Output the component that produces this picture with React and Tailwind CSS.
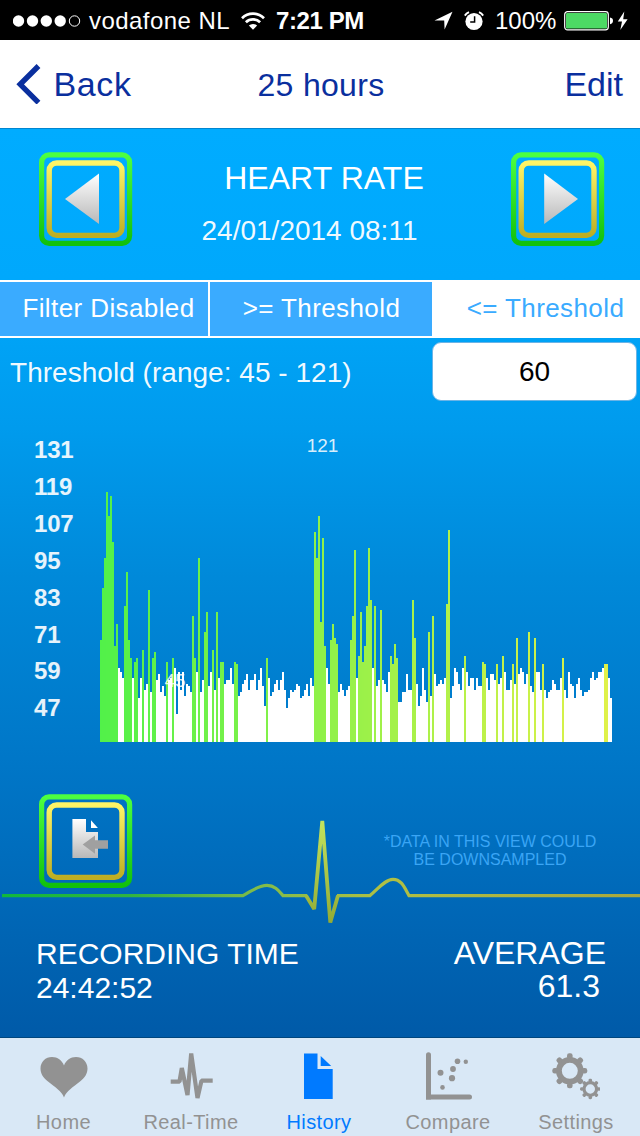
import React from 'react';

// One entry per sample, in chart units (2px each)
const samples = [
  51, 77, 92, 125, 113, 123, 100, 48, 59, 37, 35, 32, 68, 85, 51, 42,
  32, 40, 42, 22, 32, 46, 26, 29, 76, 25, 42, 45, 31, 34, 25, 28,
  23, 40, 31, 32, 42, 37, 14, 35, 26, 35, 23, 29, 28, 25, 63, 42,
  35, 92, 25, 31, 55, 65, 28, 35, 46, 26, 65, 32, 40, 40, 29, 31,
  31, 37, 29, 40, 39, 23, 25, 29, 31, 34, 26, 31, 31, 34, 26, 31,
  37, 28, 18, 42, 32, 23, 25, 29, 31, 26, 31, 35, 26, 17, 22, 26,
  25, 26, 29, 28, 22, 23, 26, 29, 23, 32, 28, 105, 92, 113, 60, 102,
  48, 37, 29, 51, 59, 52, 49, 25, 29, 26, 23, 26, 28, 51, 63, 96,
  32, 43, 65, 40, 48, 68, 97, 71, 37, 68, 28, 31, 66, 31, 29, 25,
  35, 43, 39, 49, 42, 20, 20, 25, 25, 34, 26, 26, 71, 52, 29, 18,
  23, 37, 26, 20, 55, 23, 63, 34, 28, 29, 31, 29, 32, 69, 106, 22,
  28, 37, 35, 29, 26, 37, 43, 35, 28, 32, 32, 26, 32, 28, 28, 40,
  39, 32, 26, 34, 34, 31, 39, 29, 32, 43, 35, 26, 26, 31, 39, 29,
  52, 34, 37, 35, 29, 34, 55, 28, 25, 52, 35, 35, 26, 39, 26, 22,
  25, 26, 31, 29, 26, 26, 32, 42, 26, 22, 35, 29, 28, 22, 29, 32,
  26, 23, 25, 25, 26, 32, 35, 31, 32, 35, 35, 37, 39, 39, 32, 22,
];

const THRESHOLD_UNITS = 38;
const CHART_HEIGHT = 311;

const axisLabels = [131, 119, 107, 95, 83, 71, 59, 47];

// Bars below the threshold are white, the rest fade from green to yellow
const barColor = (value, index) => {
  if (value < THRESHOLD_UNITS) return '#ffffff';
  const t = index / (samples.length - 1);
  const red = Math.round(82 + t * 142);
  return `rgb(${red}, 241, 73)`;
};

const StatusBar = () => (
  <div className="flex h-10 items-center bg-black pl-[13px] pt-px text-2xl leading-none text-white">
    <svg width="68" height="14" viewBox="0 0 68 14" className="shrink-0">
      {[5.5, 19.5, 33.3, 47.2].map((cx) => (
        <circle key={cx} cx={cx} cy="7" r="5.7" fill="#fff" />
      ))}
      <circle cx="61.5" cy="7" r="5.2" fill="none" stroke="#fff" strokeWidth="1" />
    </svg>
    <span className="ml-[8px] w-[152px] shrink-0 whitespace-nowrap tracking-[0.45px]">vodafone NL</span>
    <svg width="24" height="18" viewBox="0 0 24 18" className="shrink-0" fill="none" stroke="#fff" strokeWidth="2.7">
      <path d="M1 6.2 A15.6 15.6 0 0 1 23 6.2" />
      <path d="M4.9 10.2 A10.2 10.2 0 0 1 19.1 10.2" />
      <path d="M12 17.8 L7.9 13.6 A5.9 5.9 0 0 1 16.1 13.6 Z" fill="#fff" stroke="none" />
    </svg>
    <span className="ml-[11px] w-[158px] shrink-0 whitespace-nowrap font-bold tracking-[-0.4px]">7:21 PM</span>
    <svg width="20" height="19" viewBox="0 0 20 19" className="shrink-0">
      <path d="M0.5 9.5 L18.5 0.8 L10.6 18.6 L10.2 9.5 Z" fill="#fff" />
    </svg>
    <svg width="20" height="20" viewBox="0 0 20 20" className="ml-[10px] shrink-0">
      <circle cx="10" cy="10.5" r="8.6" fill="#fff" />
      <path d="M0.8 4.6 A10.5 10.5 0 0 1 5 1.2 M15 1.2 A10.5 10.5 0 0 1 19.2 4.6" fill="none" stroke="#fff" strokeWidth="1.9" />
      <path d="M10.6 5.2 V11 H6.2" fill="none" stroke="#000" strokeWidth="1.5" />
    </svg>
    <span className="ml-[11px] w-[69px] shrink-0 whitespace-nowrap">100%</span>
    <svg width="64" height="20" viewBox="0 0 64 20" className="shrink-0">
      <rect x="0.7" y="0.7" width="43.6" height="18.2" rx="2.8" fill="none" stroke="#fff" strokeWidth="1.2" />
      <rect x="2" y="2" width="41" height="15.6" rx="1.2" fill="#4cd964" />
      <path d="M46 6.5 Q49 7 49 9.8 Q49 12.6 46 13.2 Z" fill="#fff" />
      <path d="M60.3 0.6 L53.8 10.6 H58 L56.3 19 L63.6 8.2 H59.2 Z" fill="#fff" />
    </svg>
  </div>
);

const NavBar = () => (
  <div className="grid h-[88px] grid-cols-3 items-center bg-white text-[#0a2f9e]">
    <div className="flex items-center pl-[16px]">
      <svg width="25" height="40" viewBox="0 0 25 40" fill="none" stroke="#0a2f9e" strokeWidth="5.4">
        <path d="M22.5 2 L4.2 20.3 L22.5 38.6" />
      </svg>
      <span className="ml-[12.5px] text-[34px] leading-none tracking-[0.6px]">Back</span>
    </div>
    <span className="pl-[2px] pt-[2px] text-center text-[32px] leading-none tracking-[0.3px]">25 hours</span>
    <span className="pr-[17px] text-right text-[34px] leading-none">Edit</span>
  </div>
);

const FrameButton = ({ id, children }) => (
  <button className="h-[94px] w-[94px] shrink-0">
    <svg width="94" height="94" viewBox="0 0 94 94">
      <defs>
        <linearGradient id={`${id}-green`} x1="0" y1="0" x2="0" y2="1">
          <stop offset="0" stopColor="#4dff40" />
          <stop offset="1" stopColor="#12c10c" />
        </linearGradient>
        <linearGradient id={`${id}-yellow`} x1="0" y1="0" x2="0" y2="1">
          <stop offset="0" stopColor="#fff566" />
          <stop offset="1" stopColor="#beae22" />
        </linearGradient>
        <linearGradient id={`${id}-silver`} x1="0" y1="0" x2="0" y2="1">
          <stop offset="0" stopColor="#ffffff" />
          <stop offset="1" stopColor="#b8b8b8" />
        </linearGradient>
      </defs>
      <rect x="2.6" y="2.9" width="88" height="88.4" rx="7.5" fill="none" stroke={`url(#${id}-green)`} strokeWidth="5.2" />
      <rect x="10.2" y="11" width="72.8" height="72.4" rx="7.5" fill="none" stroke={`url(#${id}-yellow)`} strokeWidth="5.4" />
      {children}
    </svg>
  </button>
);

const Header = () => (
  <div className="flex h-[152px] items-start justify-between border-t border-[#0086d0] pl-[39px] pr-[35px] pt-[23px] text-white">
    <FrameButton id="prev">
      <path d="M26 47 L60 21.5 V72 Z" fill="url(#prev-silver)" />
    </FrameButton>
    <div className="flex flex-1 flex-col text-center">
      <h1 className="pl-[4px] text-[32px] leading-[52px] tracking-[0.05px]">HEART RATE</h1>
      <span className="pr-[25px] pt-px text-[28px] leading-[52px] text-white/95">24/01/2014 08:11</span>
    </div>
    <FrameButton id="next">
      <path d="M67 47 L33.2 21.5 V72 Z" fill="url(#next-silver)" />
    </FrameButton>
  </div>
);

const FilterTabs = () => (
  <div className="flex h-[58px] border-y-2 border-white bg-[#3aabff] text-[26px] leading-none tracking-[0.4px] text-white">
    <button className="w-[210px] border-r-2 border-white pb-[2px] pl-[9px]">Filter Disabled</button>
    <button className="w-[222px] pb-[2px] pl-px">&gt;= Threshold</button>
    <button className="flex-1 whitespace-nowrap bg-white pb-[2px] pl-[19px] text-[#3aabff]">&lt;= Threshold</button>
  </div>
);

const ThresholdRow = () => (
  <div className="flex h-[68px] items-center justify-between pl-[10px] pr-[3px] text-[28px] leading-none text-white">
    <span className="pt-[2px] tracking-[0.03px] text-white/95">Threshold (range: 45 - 121)</span>
    <div className="mb-px flex h-[59px] w-[205px] items-center justify-center rounded-[9px] border border-[#6bb4e6] bg-white text-black">
      60
    </div>
  </div>
);

const Chart = () => (
  <div className="flex h-[374px] pt-[25px]">
    <div className="flex w-[100px] flex-col pl-[34px] pt-px text-2xl font-bold leading-[36.9px] tracking-[-0.2px] text-white/90">
      {axisLabels.map((label) => (
        <span key={label}>{label}</span>
      ))}
    </div>
    <svg width="512" height={CHART_HEIGHT} viewBox={`0 0 512 ${CHART_HEIGHT}`} shapeRendering="crispEdges">
      {samples.map((value, index) => (
        <rect
          key={index}
          x={index * 2}
          y={CHART_HEIGHT - value * 2}
          width="2"
          height={value * 2}
          fill={barColor(value, index)}
        />
      ))}
      <text x="222.5" y="21" textAnchor="middle" fontSize="19" fill="#fff" fillOpacity="0.85">121</text>
      <text x="75" y="256" textAnchor="middle" fontSize="19" fill="#fff" fillOpacity="0.85">45</text>
    </svg>
  </div>
);

const Summary = () => (
  <div className="relative h-[257px] text-white">
    <svg width="640" height="257" viewBox="0 0 640 257" className="absolute left-0 top-0" fill="none" strokeWidth="3.2">
      <defs>
        <linearGradient id="pulse-line" gradientUnits="userSpaceOnUse" x1="0" y1="0" x2="640" y2="0">
          <stop offset="0" stopColor="#10b83c" />
          <stop offset="0.2" stopColor="#30b440" />
          <stop offset="0.4" stopColor="#7fbb4a" />
          <stop offset="0.6" stopColor="#b0c044" />
          <stop offset="1" stopColor="#a8a83e" />
        </linearGradient>
        <linearGradient id="pulse-spike" gradientUnits="userSpaceOnUse" x1="0" y1="40" x2="0" y2="144">
          <stop offset="0" stopColor="#c4e45e" />
          <stop offset="1" stopColor="#92aa34" />
        </linearGradient>
      </defs>
      <path
        d="M2 115.6 H243 C252 111 258 105.4 267 105.4 C275 105.4 279 111 283 115.6 H307"
        stroke="url(#pulse-line)"
      />
      <path d="M337 115.6 H370 C378 109 385 99.3 393 99.3 C402 99.3 405 109 409 115.6 H640" stroke="url(#pulse-line)" />
      <path d="M306 115.6 L314.2 129 L322.3 41 L330.3 142.5 L338 115.6" stroke="url(#pulse-spike)" strokeWidth="3.8" strokeLinejoin="bevel" />
    </svg>
    <div className="flex h-[156px] items-start justify-between pl-[39px] pt-[14px]">
      <FrameButton id="export">
        <path d="M33.4 25 H47 V38 H59 V64 H33.4 Z" fill="url(#export-silver)" />
        <path d="M52 26.3 L58.9 34 H52 Z" fill="#fff" />
        <path d="M43.7 50.4 L56 41.6 V46.2 H69 V54.8 H56 V59.7 Z" fill="#a0a0a0" />
      </FrameButton>
      <p className="w-[300px] pt-[39px] text-center text-base leading-[18px] text-[#3aa5f5]">
        *DATA IN THIS VIEW COULD
        <br />
        BE DOWNSAMPLED
      </p>
    </div>
    <div className="flex justify-between pl-[36px] pr-[34px] pt-px">
      <div className="flex flex-col text-[30px] leading-[34px]">
        <span>RECORDING TIME</span>
        <span>24:42:52</span>
      </div>
      <div className="flex flex-col text-right text-[32px] leading-[33px]">
        <span>AVERAGE</span>
        <span className="pr-[6px]">61.3</span>
      </div>
    </div>
  </div>
);

const gearTeeth = [0, 45, 90, 135, 180, 225, 270, 315];

const Gear = ({ cx, cy, radius, stroke, tooth }) => (
  <g>
    <circle cx={cx} cy={cy} r={radius} fill="none" stroke="#929292" strokeWidth={stroke} />
    {gearTeeth.map((angle) => (
      <rect
        key={angle}
        x={cx - tooth / 2}
        y={cy - radius - stroke / 2 - tooth * 0.65}
        width={tooth}
        height={tooth}
        rx={tooth * 0.4}
        fill="#929292"
        transform={`rotate(${angle} ${cx} ${cy})`}
      />
    ))}
  </g>
);

const tabs = [
  {
    label: 'Home',
    icon: (
      <path
        d="M24 45.5 C21.5 38.5 15 35.5 8 29.5 C3 25.5 0.5 21.5 0.5 16.5 C0.5 9.8 5.6 5 12 5 C17.5 5 22 8.2 24 13.5 C26 8.2 30.5 5 36 5 C42.4 5 47.5 9.8 47.5 16.5 C47.5 21.5 45 25.5 40 29.5 C33 35.5 26.5 38.5 24 45.5 Z"
        fill="#929292"
      />
    ),
  },
  {
    label: 'Real-Time',
    icon: (
      <path
        d="M3.7 29.7 H12.5 L14.8 16 L20.5 43 L24.2 1.5 L30.5 46 L34.5 28.6 H45.7"
        fill="none"
        stroke="#929292"
        strokeWidth="4.2"
        strokeLinejoin="bevel"
      />
    ),
  },
  {
    label: 'History',
    active: true,
    icon: <path d="M9 1.5 H22.5 V17 H37.7 V47 H9 Z M25.7 4 L36.2 14 H25.7 Z" fill="#007aff" />,
  },
  {
    label: 'Compare',
    icon: (
      <g fill="#929292">
        <path d="M4.5 2.8 V45 H45.5" fill="none" stroke="#929292" strokeWidth="5" strokeLinecap="round" />
        <rect x="2" y="43" width="5" height="4.5" />
        <circle cx="16.5" cy="20.7" r="3" />
        <circle cx="18.5" cy="35.4" r="2.3" />
        <circle cx="28" cy="26.2" r="3.1" />
        <circle cx="29" cy="17" r="2.9" />
        <circle cx="33.5" cy="9.2" r="2.8" />
        <circle cx="41.8" cy="9.8" r="2.2" />
      </g>
    ),
  },
  {
    label: 'Settings',
    icon: (
      <g>
        <Gear cx={17.8} cy={18.8} radius={10.9} stroke={5.8} tooth={5.6} />
        <Gear cx={38.3} cy={37} radius={6.3} stroke={3.2} tooth={3.6} />
      </g>
    ),
  },
];

const TabBar = () => (
  <div className="grid h-[99px] grid-cols-[127px_128px_128px_130px_126px] border-t border-[#00467e] bg-[#d9e8f6] pt-[14px]">
    {tabs.map((tab) => (
      <button key={tab.label} className="flex flex-col items-center">
        <svg width="48" height="48" viewBox="0 0 48 48">
          {tab.icon}
        </svg>
        <span
          className={
            tab.active
              ? 'mt-[10px] whitespace-nowrap text-xl leading-6 tracking-[0.4px] text-[#007aff]'
              : 'mt-[10px] whitespace-nowrap text-xl leading-6 tracking-[0.4px] text-[#929292]'
          }
        >
          {tab.label}
        </span>
      </button>
    ))}
  </div>
);

const App = () => {
  return (
    <div className="h-[1136px] w-[640px] overflow-hidden font-['Liberation_Sans',Arial,sans-serif]">
      <StatusBar />
      <NavBar />
      <div className="h-[909px] bg-[linear-gradient(to_bottom,#00acff_0px,#00a8fc_150px,#009bed_300px,#0089d9_450px,#0077c8_630px,#005aa8_909px)]">
        <Header />
        <FilterTabs />
        <ThresholdRow />
        <Chart />
        <Summary />
      </div>
      <TabBar />
    </div>
  );
};

export default App;
